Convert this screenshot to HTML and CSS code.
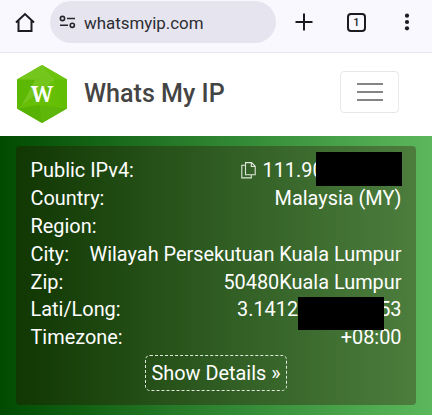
FILE: index.html
```html
<!DOCTYPE html>
<html lang="en">
<head>
<meta charset="utf-8">
<title>Whats My IP</title>
<link rel="stylesheet" href="styles.css">
</head>
<body>
<header class="browser">
  <svg class="home" width="20" height="21" viewBox="0 0 20 21"><path d="M1 10.4 10 2 19 10.4M3.5 8.4V18.9H16.5V8.4" fill="none" stroke="#1b1b21" stroke-width="2"/></svg>
  <div class="address">
    <svg class="tune" width="17" height="14" viewBox="0 0 17 14" fill="none" stroke="#25252b" stroke-width="1.6"><circle cx="3.5" cy="3.5" r="2.1"/><path d="M8 3.5H16M1 10.3H9"/><circle cx="13.3" cy="10.3" r="2.1"/></svg>
    <span class="url">whatsmyip.com</span>
  </div>
  <svg class="plus" width="18" height="18" viewBox="0 0 18 18"><path d="M9 .5V17.5M.5 9H17.5" stroke="#1b1b21" stroke-width="2"/></svg>
  <span class="tabs">1</span>
  <svg class="dots" width="6" height="18" viewBox="0 0 6 18" fill="#1b1b21"><circle cx="3" cy="2.7" r="2.1"/><circle cx="3" cy="9" r="2.1"/><circle cx="3" cy="15.3" r="2.1"/></svg>
</header>
<nav class="navbar">
  <svg class="logo" width="50" height="58" viewBox="0 0 50 58">
    <path fill="#66bf05" d="M25 0 50 14.5V43.5L25 58 0 43.5V14.5z"/>
    <path fill="#74c61c" d="M25 0 38 15 0 14.5z"/>
    <path fill="#6cc40c" d="M25 0 50 14.5 38 15z"/>
    <path fill="#5cb803" d="M0 14.5 18 15 5 40 0 43.5z"/>
    <path fill="#74c61c" d="M38 15 5 40 18 15z"/>
    <path fill="#62bd05" d="M38 15 50 14.5V43.5L40 37z"/>
    <path fill="#58b203" d="M0 43.5 23 40 25 58z"/>
    <path fill="#5fb60a" d="M23 40 50 43.5 25 58z"/>
    <text x="25" y="36.5" text-anchor="middle">W</text>
  </svg>
  <span class="brand">Whats My IP</span>
  <button class="toggler" aria-label="Menu"><span></span><span></span><span></span></button>
</nav>
<main class="hero">
  <section class="card">
    <div class="row"><span>Public IPv4:</span><span class="value ip"><svg class="copy" width="15" height="17" viewBox="0 0 15 17" fill="none" stroke="#dfe7da" stroke-width="1.1"><path d="M4.5.6H10.5L14.2 4.3V12.8H4.5zM10.3.8V4.5H14M4.2 3.2H.8V15.9H10.3V13"/></svg><span>111.90</span><i class="mask mask-ip"></i></span></div>
    <div class="row"><span>Country:</span><span>Malaysia (MY)</span></div>
    <div class="row"><span>Region:</span></div>
    <div class="row"><span>City:</span><span>Wilayah Persekutuan Kuala Lumpur</span></div>
    <div class="row"><span>Zip:</span><span>50480Kuala Lumpur</span></div>
    <div class="row"><span>Lati/Long:</span><span class="value position"><span>3.1412</span><span>53</span><i class="mask mask-position"></i></span></div>
    <div class="row"><span>Timezone:</span><span>+08:00</span></div>
    <button class="details">Show Details »</button>
  </section>
</main>
</body>
</html>
```
FILE: styles.css
```css
* { box-sizing: border-box; }
body {
  margin: 0;
  height: 415px;
  overflow: hidden;
  display: flex;
  flex-direction: column;
  font-family: Roboto, sans-serif;
  background: #fff;
}
svg { display: block; flex: none; }
.browser {
  height: 53px;
  flex: none;
  display: flex;
  align-items: center;
  padding: 0 22px 8px 15px;
  background: #f9f8ff;
  border-bottom: 1px solid #e6e4ed;
}
.address {
  width: 226px;
  height: 42px;
  margin-left: 15px;
  padding-left: 9px;
  display: flex;
  align-items: center;
  border-radius: 21px;
  background: #e6e4ee;
}
.url { margin: 2px 0 0 8px; font-size: 16.9px; color: #2c2c33; }
.plus { margin-left: 19px; }
.tabs {
  width: 19px;
  height: 19px;
  margin-left: 34px;
  border: 2px solid #1b1b21;
  border-radius: 4px;
  font-size: 11px;
  font-weight: 500;
  line-height: 15px;
  text-align: center;
  color: #1b1b21;
}
.dots { margin-left: 38px; }
.navbar {
  height: 83px;
  flex: none;
  display: flex;
  align-items: center;
  padding: 0 33px 1px 17px;
}
.logo text { font: bold 21px "Noto Serif", "DejaVu Serif", serif; fill: #fff; }
.brand { margin: -2px 0 0 17px; font-size: 25.1px; font-weight: 500; color: #444; }
.toggler {
  width: 59px;
  height: 42px;
  margin: -5px 0 0 auto;
  padding: 0;
  display: flex;
  flex-direction: column;
  align-items: center;
  justify-content: center;
  gap: 6px;
  border: 1px solid #e8e8e8;
  border-radius: 4px;
  background: #fff;
}
.toggler span { width: 26px; height: 2px; background: #858585; }
.hero {
  flex: 1;
  padding: 10px 16px;
  background: linear-gradient(90deg, #004b00, #2e8431 50%, #5cb85c);
}
.card {
  height: 259px;
  padding: 11px 14.5px 0;
  display: flex;
  flex-direction: column;
  border-radius: 4px;
  background: rgba(51, 0, 0, .3);
  color: #fff;
  font-size: 19.9px;
}
.row {
  height: 27.9px;
  display: flex;
  justify-content: space-between;
  line-height: 28px;
  white-space: nowrap;
}
.value { position: relative; display: flex; }
.ip { width: 160.5px; align-items: center; gap: 6.5px; }
.position { width: 164.5px; justify-content: space-between; }
.mask { position: absolute; background: #000; }
.mask-ip { left: 75px; top: -5px; width: 86px; height: 34px; }
.mask-position { left: 61px; top: 1px; width: 86px; height: 33px; }
.details {
  width: 142px;
  height: 36px;
  margin-top: 3px;
  padding: 0;
  align-self: center;
  border: 1px dashed #e3e9df;
  border-radius: 5px;
  background: none;
  color: #fff;
  font: 19.9px Roboto, sans-serif;
}
```
